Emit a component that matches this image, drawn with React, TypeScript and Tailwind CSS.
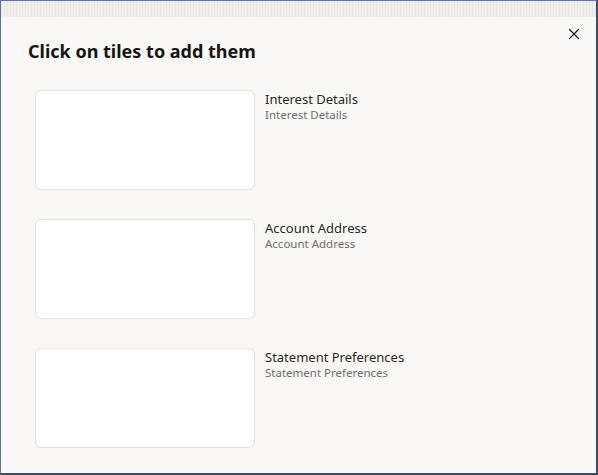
import { X } from "lucide-react";

const tiles = [
  { title: "Interest Details", sub: "Interest Details" },
  { title: "Account Address", sub: "Account Address" },
  { title: "Statement Preferences", sub: "Statement Preferences" },
];

export default function App() {
  return (
    <div
      className="w-[598px] h-[475px] overflow-hidden border-l border-t border-[#6670a0] border-r-2 border-b-2 border-r-[#434b6c] border-b-[#434b6c] bg-[#f9f8f6] flex flex-col"
      style={{ fontFamily: '"Noto Sans", "Open Sans", sans-serif' }}
    >
      {/* backdrop strip above the dialog */}
      <div className="h-[16px] shrink-0 bg-[#edecea] bg-[repeating-linear-gradient(90deg,#e6e5e3_0px,#e6e5e3_1px,#f1f0ee_1px,#f1f0ee_3px)]" />

      <div className="relative flex-1 px-[27px]">
        <button className="absolute right-[13px] top-[8px] text-[#161513]">
          <X size={18} strokeWidth={1.6} />
        </button>

        <h1 className="mt-[22px] text-[18px] font-bold text-[#161513] leading-[24px]">
          Click on tiles to add them
        </h1>

        <div className="mt-[27px] pl-[7px] flex flex-col gap-[29px]">
          {tiles.map((t) => (
            <div key={t.title} className="flex gap-[10px]">
              <div className="w-[220px] h-[100px] shrink-0 rounded-[6px] border border-[#e3e2e0] bg-white" />
              <div className="pt-[1px]">
                <div className="text-[13px] leading-[17px] text-[#2a2926]">{t.title}</div>
                <div className="text-[11.5px] leading-[14px] text-[#6f6e6b]">{t.sub}</div>
              </div>
            </div>
          ))}
        </div>
      </div>
    </div>
  );
}
